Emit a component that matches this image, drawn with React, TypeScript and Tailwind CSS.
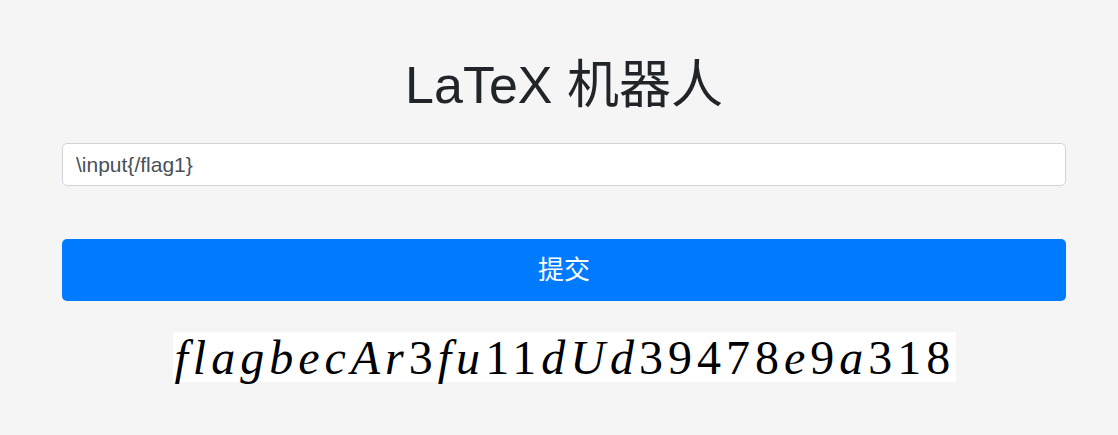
export default function App() {
  const parts: [string, boolean][] = [
    ['flagbecAr', true],
    ['3', false],
    ['fu', true],
    ['11', false],
    ['dUd', true],
    ['39478', false],
    ['e', true],
    ['9', false],
    ['a', true],
    ['318', false],
  ]

  return (
    <div
      className="min-h-[435px] w-full bg-[#f5f5f5] text-[#212529]"
      style={{ fontFamily: '"Liberation Sans", "Noto Sans CJK SC", sans-serif' }}
    >
      <div className="ml-[62px] flex w-[1004px] flex-col items-center pt-[54px]">
        <h1 className="text-[52px] leading-[62px] font-normal">LaTeX 机器人</h1>

        <input
          type="text"
          defaultValue="\input{/flag1}"
          className="mt-[27px] h-[43px] w-full rounded-[5px] border border-[#ced4da] bg-white px-[13px] text-[21px] text-[#495057] outline-none"
        />

        <button
          type="button"
          className="mt-[53px] h-[62px] w-full rounded-[5px] bg-[#007bff] text-[26px] text-white"
        >
          提交
        </button>

        <div
          className="mt-[31px] flex h-[50px] w-[783px] items-center justify-start bg-white pt-[2px] pl-[2px] text-[48px] leading-none tracking-[5px] text-black"
          style={{ fontFamily: '"Liberation Serif", "DejaVu Serif", serif' }}
        >
          {parts.map(([t, it], i) => (
            <span key={i} className={it ? 'italic' : ''}>
              {t}
            </span>
          ))}
        </div>
      </div>
    </div>
  )
}
